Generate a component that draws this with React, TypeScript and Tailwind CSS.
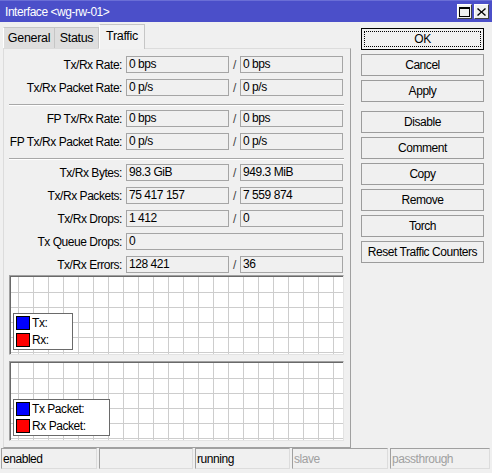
import React from "react";

type PairRow = { label: string; a: string; b?: string; single?: boolean };

const rateRows: PairRow[] = [
  { label: "Tx/Rx Rate:", a: "0 bps", b: "0 bps" },
  { label: "Tx/Rx Packet Rate:", a: "0 p/s", b: "0 p/s" },
];

const fpRows: PairRow[] = [
  { label: "FP Tx/Rx Rate:", a: "0 bps", b: "0 bps" },
  { label: "FP Tx/Rx Packet Rate:", a: "0 p/s", b: "0 p/s" },
];

const counterRows: PairRow[] = [
  { label: "Tx/Rx Bytes:", a: "98.3 GiB", b: "949.3 MiB" },
  { label: "Tx/Rx Packets:", a: "75 417 157", b: "7 559 874" },
  { label: "Tx/Rx Drops:", a: "1 412", b: "0" },
  { label: "Tx Queue Drops:", a: "0", single: true },
  { label: "Tx/Rx Errors:", a: "128 421", b: "36" },
];

const buttons = ["Cancel", "Apply"];
const actionButtons = ["Disable", "Comment", "Copy", "Remove", "Torch", "Reset Traffic Counters"];

function Field({ value, wide }: { value: string; wide?: boolean }) {
  return (
    <div
      className={`${wide ? "w-[217px]" : "w-[103px]"} h-[17px] border border-[#a5a5a5] bg-[#f0f0f0] pl-[2px] leading-[15px] whitespace-nowrap overflow-hidden`}
    >
      {value}
    </div>
  );
}

function Row({ row }: { row: PairRow }) {
  return (
    <div className="flex h-[17px] items-center">
      <div className="w-[117px] flex justify-end whitespace-nowrap pr-[4px]">{row.label}</div>
      {row.single ? (
        <Field value={row.a} wide />
      ) : (
        <>
          <Field value={row.a} />
          <div className="w-[11px] text-center text-[#444]">/</div>
          <Field value={row.b ?? ""} />
        </>
      )}
    </div>
  );
}

function Separator() {
  return <div className="h-[2px] border-t border-[#a8a8a8] border-b border-b-white" />;
}

// Graph area with a 15px grid and a legend in the lower left corner
function Graph({ legend, legendWidth }: { legend: [string, string]; legendWidth: string }) {
  const vx = Array.from({ length: 24 }, (_, i) => 7.5 + i * 15);
  const hy = Array.from({ length: 6 }, (_, i) => 1.5 + i * 15);
  return (
    <div className="h-[80px] border-t border-l border-[#a0a0a0] border-b border-r border-b-[#e3e3e3] border-r-[#e3e3e3] shadow-[inset_1px_1px_0_#696969]">
      <div className="relative w-full h-full overflow-hidden pl-[1px] pt-[1px]">
        <svg className="absolute left-[1px] top-[1px] w-[332px] h-[77px]" width="332" height="77">
          <rect x="0" y="0" width="332" height="77" fill="#ffffff" />
          {vx.map((x) => (
            <line key={`v${x}`} x1={x} y1={0} x2={x} y2={77} stroke="#cdcdcd" strokeWidth={1} />
          ))}
          {hy.map((y) => (
            <line key={`h${y}`} x1={0} y1={y + 14} x2={332} y2={y + 14} stroke="#cdcdcd" strokeWidth={1} />
          ))}
        </svg>
        <div
          className={`absolute left-[3px] bottom-[4px] ${legendWidth} border border-[#6a6a6a] bg-white px-[2px] py-[2px] flex flex-col gap-[3px]`}
        >
          <div className="flex items-center gap-[2px] h-[14px]">
            <div className="w-[14px] h-[14px] border border-black bg-[#0000ff]" />
            <span className="whitespace-nowrap">{legend[0]}</span>
          </div>
          <div className="flex items-center gap-[2px] h-[14px]">
            <div className="w-[14px] h-[14px] border border-black bg-[#ff0000]" />
            <span className="whitespace-nowrap">{legend[1]}</span>
          </div>
        </div>
      </div>
    </div>
  );
}

function Button({ label, primary }: { label: string; primary?: boolean }) {
  if (primary) {
    return (
      <div className="h-[22px] border border-black bg-[#f0f0f0] p-[2px]">
        <div className="h-full border border-dotted border-black flex items-center justify-center">
          {label}
        </div>
      </div>
    );
  }
  return (
    <div className="h-[22px] border border-[#9c9c9c] bg-[#f0f0f0] flex items-center justify-center whitespace-nowrap">
      {label}
    </div>
  );
}

function TitleButton({ kind }: { kind: "max" | "close" }) {
  return (
    <div className="w-[15px] h-[15px] bg-[#f0f0f0] border border-t-white border-l-white border-b-[#404040] border-r-[#404040] flex items-center justify-center">
      {kind === "max" ? (
        <svg width="11" height="10" viewBox="0 0 11 10">
          <rect x="0.5" y="0.5" width="10" height="9" fill="none" stroke="#000" />
          <line x1="0" y1="1.5" x2="11" y2="1.5" stroke="#000" />
        </svg>
      ) : (
        <svg width="9" height="8" viewBox="0 0 9 8">
          <path d="M1 0 L4.5 3.2 L8 0 L9 1 L5.5 4 L9 7 L8 8 L4.5 4.8 L1 8 L0 7 L3.5 4 L0 1 Z" fill="#000" />
        </svg>
      )}
    </div>
  );
}

const statusCells = [
  { text: "enabled", w: "w-[96px]", muted: false },
  { text: "", w: "w-[94px]", muted: false },
  { text: "running", w: "w-[95px]", muted: false },
  { text: "slave", w: "w-[96px]", muted: true },
  { text: "passthrough", w: "w-[100px]", muted: true },
];

export default function App() {
  return (
    <div className="w-[492px] h-[473px] bg-[#f0f0f0] flex flex-col overflow-hidden text-black font-['Liberation_Sans',Arial,sans-serif] text-[12px] tracking-[-0.45px]">
      {/* title bar */}
      <div className="h-[22px] bg-[#4b4fc9] border-t border-[#6a6ed6] flex items-center pl-[5px] pr-[3px]">
        <span className="text-white flex-1">Interface &lt;wg-rw-01&gt;</span>
        <div className="flex gap-[2px]">
          <TitleButton kind="max" />
          <TitleButton kind="close" />
        </div>
      </div>

      <div className="h-[426px] flex">
        {/* left side: tabs and traffic panel */}
        <div className="w-[351px] pl-[3px] flex flex-col">
          <div className="h-[26px] flex items-end text-[12.5px] tracking-[-0.3px]">
            <div className="w-[52px] h-[21px] bg-[#dedede] border border-b-0 border-[#c6c6c6] border-l-white flex items-center justify-center">
              General
            </div>
            <div className="w-[44px] h-[21px] bg-[#dedede] border border-b-0 border-l-0 border-[#c6c6c6] flex items-center justify-center">
              Status
            </div>
            <div className="relative z-10 -mb-[1px] w-[46px] h-[25px] bg-[#f2f2f2] border border-b-0 border-[#c6c6c6] border-l-white flex items-center justify-center pb-[1px]">
              Traffic
            </div>
          </div>
          <div className="h-[400px] border border-t-[#dcdcdc] border-l-[#dcdcdc] border-r-[#a0a0a0] border-b-[#a0a0a0] pl-[5px] pr-[6px] pt-[7px] flex flex-col">
            <div className="flex flex-col gap-[6px]">
              {rateRows.map((r) => (
                <Row key={r.label} row={r} />
              ))}
            </div>
            <div className="mt-[8px] mb-[4px]">
              <Separator />
            </div>
            <div className="flex flex-col gap-[6px]">
              {fpRows.map((r) => (
                <Row key={r.label} row={r} />
              ))}
            </div>
            <div className="mt-[8px] mb-[4px]">
              <Separator />
            </div>
            <div className="flex flex-col gap-[6px]">
              {counterRows.map((r) => (
                <Row key={r.label} row={r} />
              ))}
            </div>
            <div className="mt-[2px] flex flex-col gap-[6px]">
              <Graph legend={["Tx:", "Rx:"]} legendWidth="w-[60px]" />
              <Graph legend={["Tx Packet:", "Rx Packet:"]} legendWidth="w-[97px]" />
            </div>
          </div>
        </div>

        {/* right side: dialog buttons */}
        <div className="ml-[10px] w-[123px] pt-[6px] flex flex-col gap-[4px]">
          <Button label="OK" primary />
          {buttons.map((b) => (
            <Button key={b} label={b} />
          ))}
          <div className="h-[5px] -mt-[4px]" />
          {actionButtons.map((b) => (
            <Button key={b} label={b} />
          ))}
        </div>
      </div>

      {/* status bar */}
      <div className="h-[25px] flex gap-[2px] pl-[1px]">
        {statusCells.map((c, i) => (
          <div
            key={i}
            className={`${c.w} h-[21px] border border-[#a0a0a0] border-b-[#dcdcdc] border-r-[#dcdcdc] flex items-center pl-[1px] pt-[1px] ${c.muted ? "text-[#a0a0a0]" : "text-black"}`}
          >
            {c.text}
          </div>
        ))}
      </div>
    </div>
  );
}
